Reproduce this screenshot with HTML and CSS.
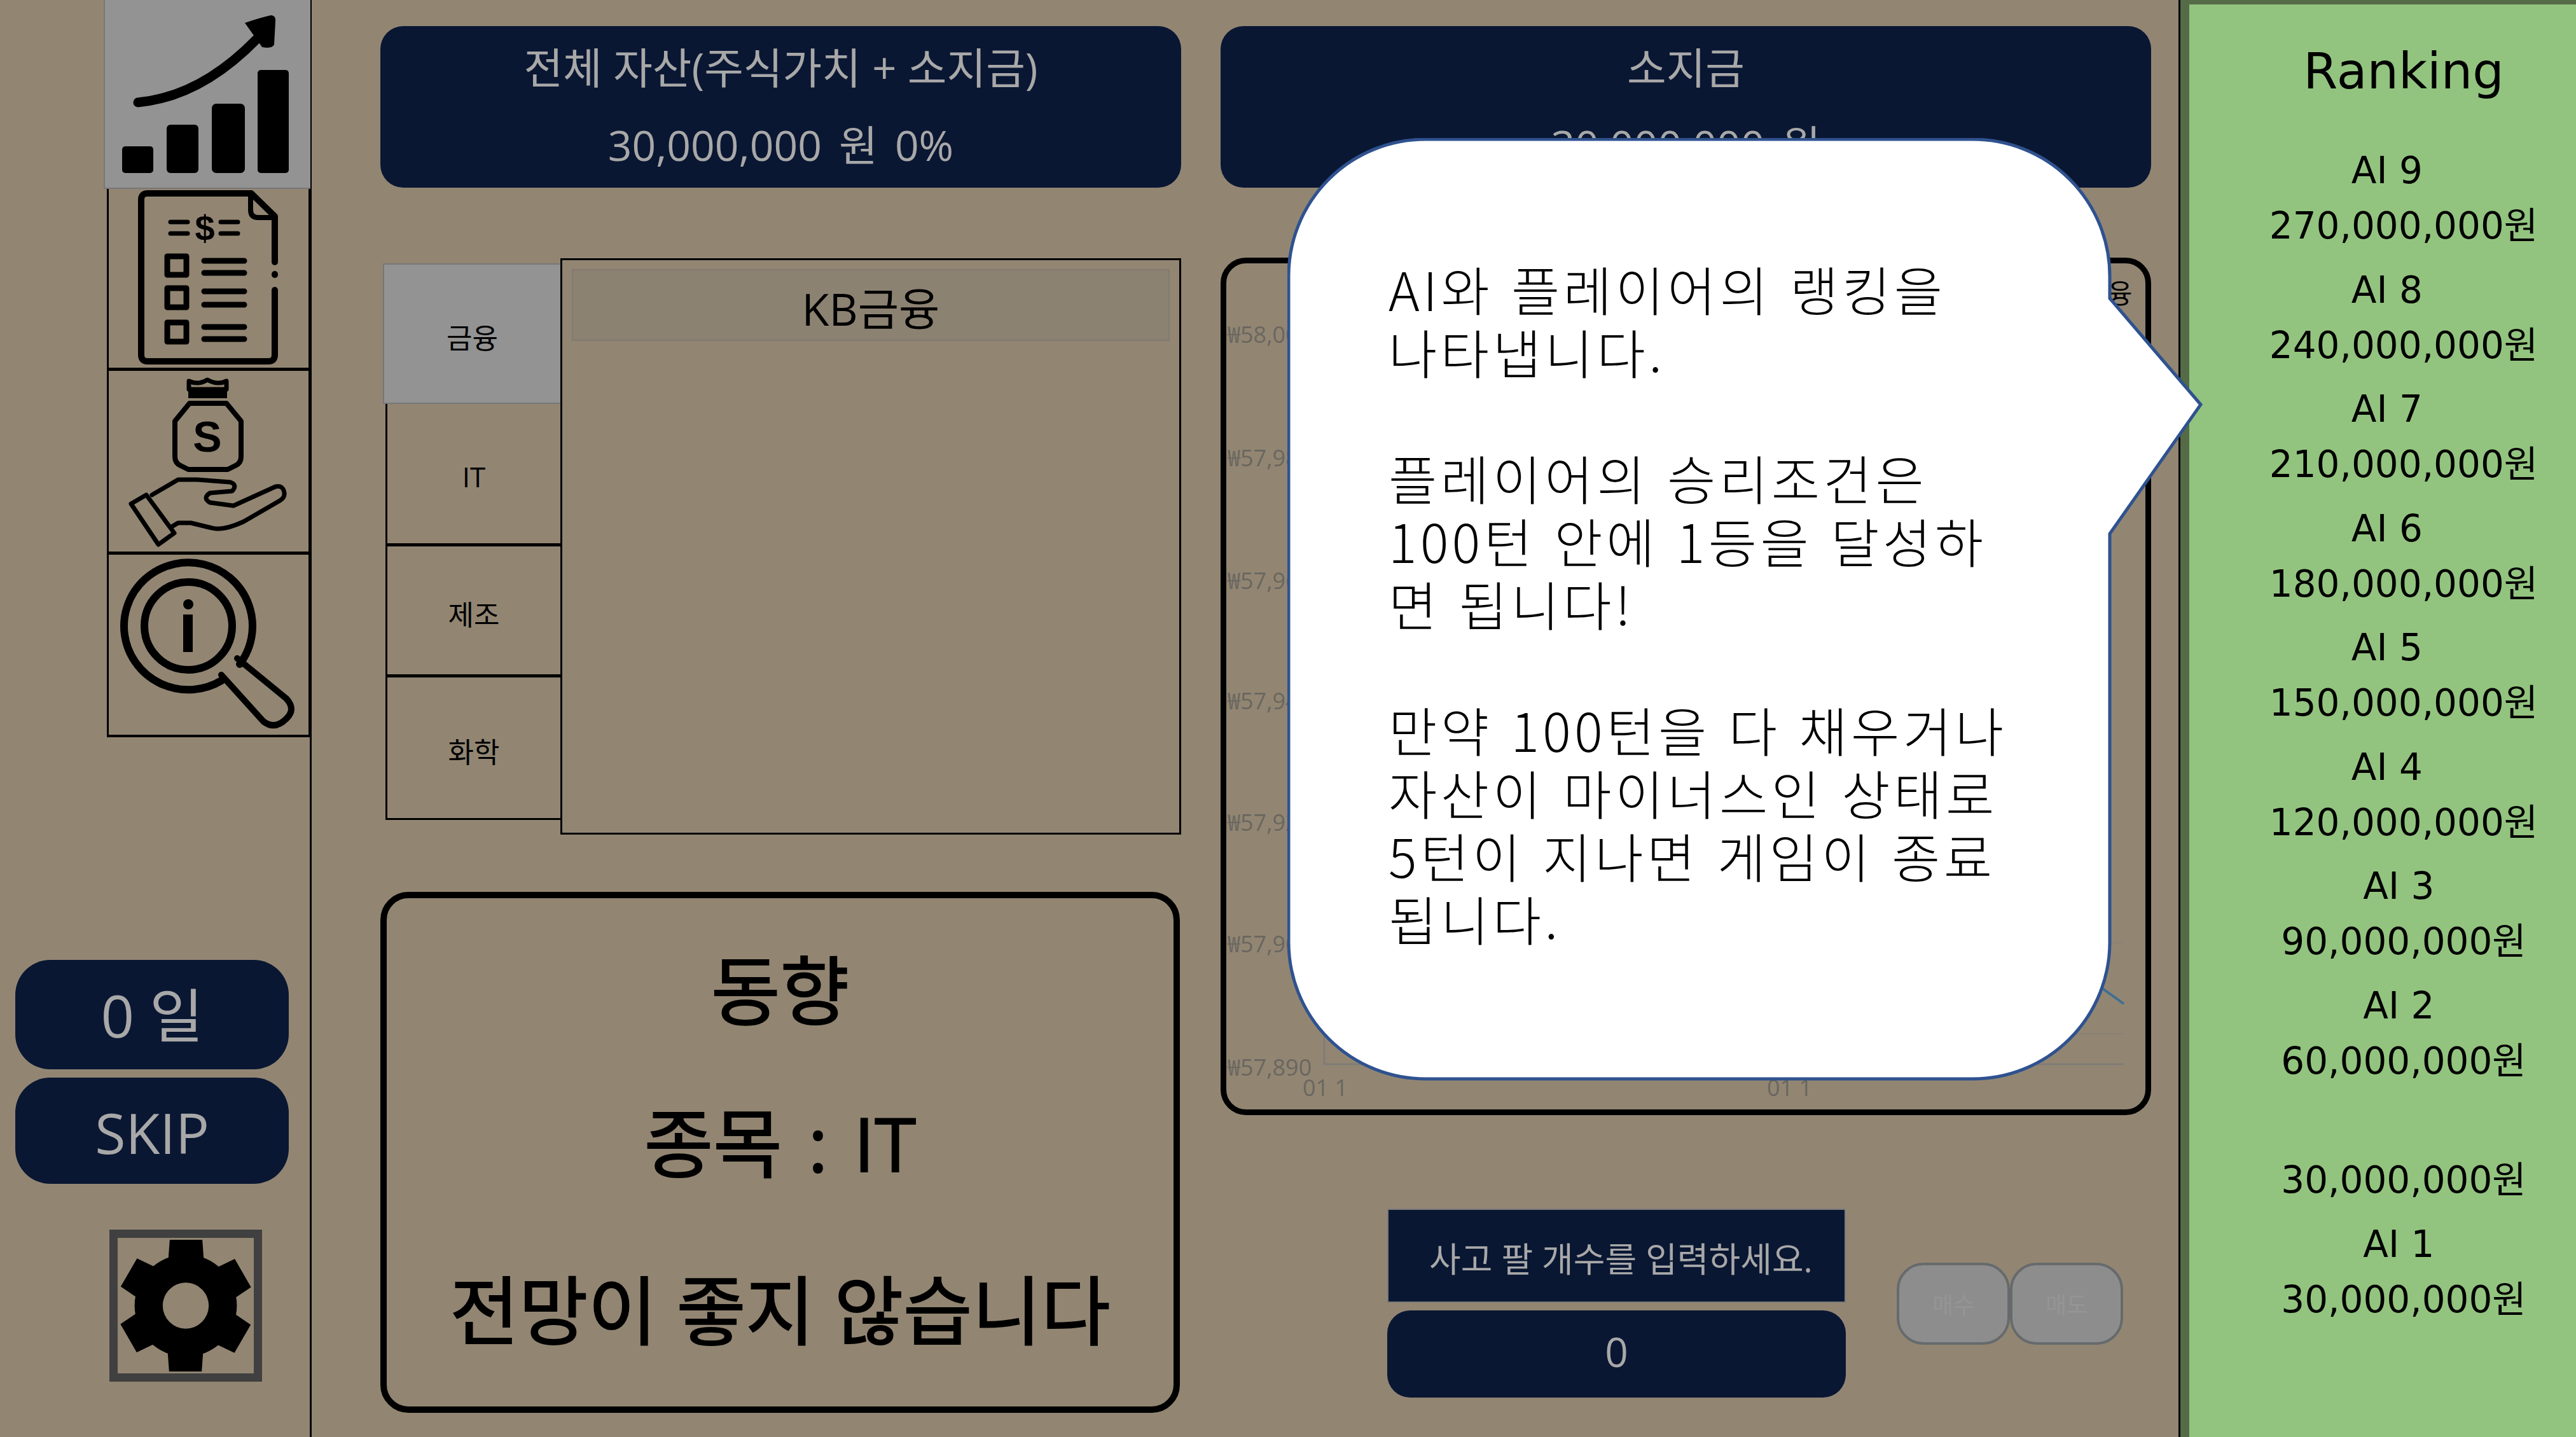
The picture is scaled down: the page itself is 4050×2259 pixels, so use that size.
FILE: index.html
```html
<!DOCTYPE html>
<html lang="ko">
<head>
    <meta charset="utf-8">
    <title>주식 게임</title>
    <link rel="stylesheet" href="styles.css">
</head>
<body>

<div class="screen">

    <aside class="sidebar">
        <nav class="nav">
            <div class="nav-item nav-active">
                <svg class="nav-icon" viewBox="163 0 325 297">
                    <rect x="192" y="230" width="49" height="42" rx="5"/>
                    <rect x="262" y="196" width="50" height="76" rx="6"/>
                    <rect x="333" y="163" width="52" height="109" rx="7"/>
                    <rect x="405" y="110" width="49" height="162" rx="5"/>
                    <path class="ink" stroke-width="15" d="M217 161 Q315 152 403 62"/>
                    <path d="M385 36 Q408 28 426 24 Q434 24 433 34 L431 70 Q428 77 412 74 Z"/>
                </svg>
            </div>
            <div class="nav-item nav-doc">
                <svg class="nav-icon" viewBox="168 297 319 286">
                    <path class="ink" stroke-width="10" d="M432 412 V340 L395 304 H232 Q222 304 222 314 V558 Q222 568 232 568 H422 Q432 568 432 558 V456"/>
                    <path class="ink" stroke-width="10" d="M432 431 v1"/>
                    <path class="ink" stroke-width="8" d="M394 304 V330 Q394 342 406 342 H432"/>
                    <path class="ink" stroke-width="7" d="M268 349 H295 M268 367 H295 M347 349 H374 M347 367 H374"/>
                    <text class="icon-glyph" x="322" y="378" font-size="56" text-anchor="middle">$</text>
                    <path class="square" stroke-width="9" d="M263 403 H293 V432 H263 Z M263 453 H293 V483 H263 Z M263 507 H293 V537 H263 Z"/>
                    <path class="ink" stroke-width="9" d="M321 410 H384 M321 429 H384 M321 458 H384 M321 479 H384 M321 514 H384 M321 533 H384"/>
                </svg>
            </div>
            <div class="nav-item nav-bag">
                <svg class="nav-icon" viewBox="168 583 319 289">
                    <path class="ink" stroke-width="7" d="M297 599 Q312 606 326 597 Q342 606 356 599 V612 H297 Z"/>
                    <rect x="296" y="612" width="61" height="14"/>
                    <path class="ink" stroke-width="8" d="M298 634 H356 L379 662 V718 Q379 728 370 732 L358 738 H296 L284 732 Q275 728 275 718 V662 Z"/>
                    <text class="icon-glyph" x="326" y="710" font-size="68" text-anchor="middle">S</text>
                    <path class="ink" stroke-width="7" d="M206 792 L230 778 L274 838 L249 856 Z"/>
                    <path class="ink" stroke-width="7" d="M239 778 L280 754 H310 L362 758 Q374 762 365 772 L330 775 Q318 783 330 790 L367 795 L433 765 Q445 762 447 775 Q448 782 440 787 L383 820 Q350 835 333 830 L300 822 H280 L270 828"/>
                </svg>
            </div>
            <div class="nav-item nav-info">
                <svg class="nav-icon" viewBox="168 872 319 287">
                    <path class="ink" stroke-width="12" d="M377 1044 A101 100 0 1 0 348 1070"/>
                    <circle class="ink" stroke-width="12" cx="296" cy="984" r="69"/>
                    <circle cx="296" cy="950" r="8"/>
                    <rect x="288" y="966" width="15" height="59"/>
                    <path class="ink" stroke-width="10" d="M373 1035 L450 1098 Q466 1115 450 1130 Q432 1148 414 1134 L348 1061"/>
                </svg>
            </div>
        </nav>

        <div class="side-btn side-day">0 일</div>
        <div class="side-btn side-skip">SKIP</div>

        <div class="gear-box">
            <svg class="gear" viewBox="185 1946 210 212">
                <defs>
                    <path id="tooth" d="M265 1949 H316 L319 1990 H262 Z"/>
                </defs>
                <circle cx="290" cy="2052" r="80"/>
                <use href="#tooth"/>
                <use href="#tooth" transform="rotate(60 290 2052)"/>
                <use href="#tooth" transform="rotate(120 290 2052)"/>
                <use href="#tooth" transform="rotate(180 290 2052)"/>
                <use href="#tooth" transform="rotate(240 290 2052)"/>
                <use href="#tooth" transform="rotate(300 290 2052)"/>
                <circle class="gear-hole" cx="290" cy="2052" r="36"/>
            </svg>
        </div>
    </aside>

    <main class="main">
        <section class="col-left">
            <div class="money-panel">
                <div>전체 자산(주식가치 + 소지금)</div>
                <div class="money-value">30,000,000 원 0%</div>
            </div>

            <div class="stocks">
                <div class="tabs">
                    <div class="tab tab-active">금융</div>
                    <div class="tab tab-it">IT</div>
                    <div class="tab tab-mid">제조</div>
                    <div class="tab tab-last">화학</div>
                </div>
                <div class="stock-list">
                    <div class="stock-row">KB금융</div>
                </div>
            </div>

            <div class="trend">
                <div class="trend-line trend-title">동향</div>
                <div class="trend-line trend-item">종목 : IT</div>
                <div class="trend-line trend-note">전망이 좋지 않습니다</div>
            </div>
        </section>

        <section class="col-right">
            <div class="money-panel">
                <div>소지금</div>
                <div class="money-value">30,000,000 원</div>
            </div>

            <div class="chart">
                <svg class="chart-svg" viewBox="0 0 1446 1330">
                    <g class="grid">
                        <path d="M154 1068 H1411 M154 1211 H1411"/>
                    </g>
                    <path class="axis" d="M154 1070 V1259 H1411"/>
                    <path class="price-line" d="M1375 1138 L1411 1164"/>
                    <g class="chart-label">
                        <text x="2" y="125">₩58,000</text>
                        <text x="2" y="319">₩57,980</text>
                        <text x="2" y="512">₩57,960</text>
                        <text x="2" y="701">₩57,940</text>
                        <text x="2" y="892">₩57,920</text>
                        <text x="2" y="1083">₩57,900</text>
                        <text x="2" y="1277">₩57,890</text>
                        <text x="120" y="1309">01 1</text>
                        <text x="850" y="1309">01 1</text>
                    </g>
                    <text class="chart-name" x="1347" y="63">금융</text>
                </svg>
            </div>

            <div class="trade">
                <div class="trade-form">
                    <div class="trade-label">사고 팔 개수를 입력하세요.</div>
                    <div class="trade-input">0</div>
                </div>
                <div class="trade-btns">
                    <div class="trade-btn">매수</div>
                    <div class="trade-btn">매도</div>
                </div>
            </div>
        </section>
    </main>

    <aside class="ranking">
        <div class="rank-title">Ranking</div>
        <div class="rank-row"><div class="rank-name">AI 9</div><div class="rank-money">270,000,000원</div></div>
        <div class="rank-row"><div class="rank-name">AI 8</div><div class="rank-money">240,000,000원</div></div>
        <div class="rank-row"><div class="rank-name">AI 7</div><div class="rank-money">210,000,000원</div></div>
        <div class="rank-row"><div class="rank-name">AI 6</div><div class="rank-money">180,000,000원</div></div>
        <div class="rank-row"><div class="rank-name">AI 5</div><div class="rank-money">150,000,000원</div></div>
        <div class="rank-row"><div class="rank-name">AI 4</div><div class="rank-money">120,000,000원</div></div>
        <div class="rank-row"><div class="rank-name">AI 3</div><div class="rank-money">90,000,000원</div></div>
        <div class="rank-row"><div class="rank-name">AI 2</div><div class="rank-money">60,000,000원</div></div>
        <div class="rank-row"><div class="rank-name">&nbsp;</div><div class="rank-money">30,000,000원</div></div>
        <div class="rank-row"><div class="rank-name">AI 1</div><div class="rank-money">30,000,000원</div></div>
    </aside>

    <div class="bubble">
        <svg class="bubble-shape" viewBox="0 0 1440 1482">
            <path d="M217 2 H1078 A215 215 0 0 1 1293 217 V252 L1436 419 L1293 622 V1264 A215 215 0 0 1 1078 1479 H217 A215 215 0 0 1 2 1264 V217 A215 215 0 0 1 217 2 Z"/>
        </svg>
        <div class="bubble-text">
            AI와 플레이어의 랭킹을<br>
            나타냅니다.<br>
            <br>
            플레이어의 승리조건은<br>
            100턴 안에 1등을 달성하<br>
            면 됩니다!<br>
            <br>
            만약 100턴을 다 채우거나<br>
            자산이 마이너스인 상태로<br>
            5턴이 지나면 게임이 종료<br>
            됩니다.
        </div>
    </div>

</div>

</body>
</html>
```
FILE: styles.css
```css
* {
    box-sizing: border-box;
}
html, body {
    margin: 0;
    padding: 0;
}
body {
    font-family: "Open Sans", "Noto Sans CJK KR", sans-serif;
    background-color: #928673;
    color: #000;
}
.screen {
    position: relative;
    display: flex;
    width: 4050px;
    height: 2259px;
    overflow: hidden;
}

/* left menu */
.sidebar {
    width: 490px;
    height: 100%;
    border-right: 3px solid #000;
    flex-shrink: 0;
}
.nav {
    margin-left: 163px;
    width: 325px;
}
.nav-item {
    margin-left: 5px;
    border-left: 3px solid #000;
    border-right: 3px solid #000;
    border-bottom: 5px solid #000;
    overflow: hidden;
}
.nav-active {
    height: 297px;
    margin-left: 0;
    background-color: #939393;
    border: none;
    border-left: 2px solid #777;
    border-bottom: 2px solid #777;
}
.nav-doc {
    height: 286px;
}
.nav-bag {
    height: 289px;
}
.nav-info {
    height: 287px;
    border-bottom-width: 4px;
}
.nav-icon {
    display: block;
    width: 319px;
    margin-left: -3px;
}
.nav-active .nav-icon {
    width: 325px;
    height: 297px;
    margin-left: -2px;
}
.nav-doc .nav-icon {
    height: 286px;
}
.nav-bag .nav-icon {
    height: 289px;
}
.nav-info .nav-icon {
    height: 287px;
}
.ink {
    fill: none;
    stroke: #000;
    stroke-linecap: round;
    stroke-linejoin: round;
}
.square {
    fill: none;
    stroke: #000;
    stroke-linejoin: round;
}
.icon-glyph {
    font-family: "Liberation Sans", sans-serif;
    font-weight: 700;
}
.side-btn {
    display: flex;
    align-items: center;
    justify-content: center;
    width: 430px;
    margin-left: 24px;
    background-color: #0a1733;
    color: #a8a8a8;
    border-radius: 55px;
}
.side-day {
    height: 172px;
    margin-top: 350px;
    padding-bottom: 8px;
    font-size: 92px;
}
.side-skip {
    height: 167px;
    margin-top: 13px;
    padding-top: 4px;
    font-size: 88px;
}
.gear-box {
    width: 240px;
    height: 239px;
    margin-top: 72px;
    margin-left: 172px;
    border: 13px solid #404040;
}
.gear {
    display: block;
    width: 214px;
    height: 213px;
}
.gear-hole {
    fill: #928673;
}

/* middle */
.main {
    display: flex;
    width: 2938px;
    padding-left: 108px;
    column-gap: 62px;
    border-right: 3px solid #000;
    flex-shrink: 0;
}
.col-left {
    width: 1259px;
}
.col-right {
    width: 1463px;
}
.money-panel {
    height: 254px;
    margin-top: 41px;
    padding-top: 5px;
    background-color: #0a1733;
    color: #a8a8a8;
    border-radius: 36px;
    font-size: 67px;
    line-height: 121px;
    text-align: center;
}
.money-value {
    font-size: 66px;
    word-spacing: 10px;
}
.stocks {
    display: flex;
    height: 906px;
    margin-top: 111px;
}
.tabs {
    width: 279px;
    margin-top: 8px;
    margin-left: 4px;
    font-size: 44px;
}
.tab {
    display: flex;
    align-items: center;
    justify-content: center;
    padding-top: 8px;
    margin-left: 4px;
    border-left: 3px solid #000;
    border-bottom: 5px solid #000;
}
.tab-active {
    height: 221px;
    margin-left: 0;
    background-color: #939393;
    border-left: 2px solid #777;
    border-top: 2px solid #777;
    border-bottom: 2px solid #777;
}
.tab-it {
    height: 224px;
}
.tab-mid {
    height: 206px;
}
.tab-last {
    height: 224px;
    border-bottom-width: 3px;
}
.stock-list {
    width: 976px;
    padding: 14px 15px;
    border: 3px solid #000;
}
.stock-row {
    height: 113px;
    padding-top: 8px;
    background-color: #8c8272;
    border: 2px solid #807a72;
    font-size: 70px;
    line-height: 104px;
    text-align: center;
}
.trend {
    display: flex;
    flex-direction: column;
    height: 819px;
    margin-top: 90px;
    padding-top: 10px;
    width: 1257px;
    border: 10px solid #000;
    border-radius: 44px;
    font-size: 118px;
    -webkit-text-stroke: 2px #000;
    text-align: center;
}
.trend-title {
    padding-top: 20px;
    line-height: 230px;
}
.trend-item {
    line-height: 250px;
    word-spacing: 10px;
}
.trend-note {
    padding-top: 13px;
    line-height: 250px;
}
.chart {
    height: 1348px;
    margin-top: 110px;
    border: 9px solid #000;
    border-radius: 40px;
}
.chart-svg {
    display: block;
    width: 1446px;
    height: 1330px;
}
.grid path {
    fill: none;
    stroke: #8a8174;
    stroke-width: 2;
}
.axis {
    fill: none;
    stroke: #7f7c78;
    stroke-width: 3;
}
.price-line {
    fill: none;
    stroke: #3f6f94;
    stroke-width: 4;
}
.chart-label text {
    font-size: 36px;
    fill: #6a665f;
}
.chart-name {
    font-size: 42px;
    fill: #000;
}
.trade {
    display: flex;
    margin-top: 147px;
    padding-left: 262px;
}
.trade-form {
    width: 721px;
}
.trade-label {
    height: 148px;
    padding-left: 64px;
    background-color: #0a1733;
    border: 2px solid #7b7b78;
    color: #a8a8a8;
    font-size: 54px;
    line-height: 154px;
}
.trade-input {
    height: 137px;
    margin-top: 12px;
    background-color: #0a1733;
    color: #a8a8a8;
    border-radius: 36px;
    font-size: 64px;
    line-height: 130px;
    text-align: center;
}
.trade-btns {
    display: flex;
    margin-left: 80px;
    margin-top: 85px;
}
.trade-btn {
    display: flex;
    align-items: center;
    justify-content: center;
    width: 178px;
    height: 129px;
    background-color: #8d8d8d;
    border: 4px solid #676a6c;
    border-radius: 42px;
    color: #959595;
    font-size: 36px;
}

/* right panel */
.ranking {
    flex: 1;
    padding-left: 66px;
    background-color: #93c47f;
    border-top: 7px solid #556b47;
    border-left: 14px solid #556b47;
    font-family: "DejaVu Sans", "Noto Sans CJK KR", sans-serif;
    font-size: 58px;
    text-align: center;
}
.rank-title {
    height: 214px;
    font-size: 78px;
    line-height: 211px;
}
.rank-row {
    width: fit-content;
    margin: 0 auto;
    padding-bottom: 13.5px;
    text-align: left;
}
.rank-name {
    padding-left: 129px;
    line-height: 94px;
}
.rank-money {
    line-height: 80px;
}

/* help bubble over the page */
.bubble {
    position: absolute;
    left: 2024px;
    top: 217px;
    width: 1440px;
    height: 1482px;
    padding: 187px 0 0 159px;
    font-family: "Noto Sans CJK KR", sans-serif;
    font-size: 83px;
    font-weight: 300;
    letter-spacing: 5.5px;
    line-height: 99px;
}
.bubble-shape {
    position: absolute;
    left: 0;
    top: 0;
    width: 1440px;
    height: 1482px;
}
.bubble-shape path {
    fill: #fff;
    stroke: #2f528f;
    stroke-width: 5;
}
.bubble-text {
    position: relative;
}
```
